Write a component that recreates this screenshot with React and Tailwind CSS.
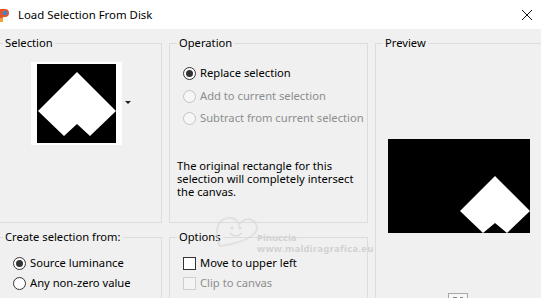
import React from "react";

const font = { fontFamily: '"Noto Sans", "Open Sans", Arial, sans-serif' };

function Radio({ checked, disabled, label }) {
  return (
    <div className="flex items-center h-full">
      <span
        className={`flex shrink-0 items-center justify-center w-[13px] h-[13px] rounded-full border ${
          disabled ? "border-[#c4c4c4] bg-[#f6f6f6]" : "border-[#333] bg-white"
        }`}
      >
        {checked && <span className="w-[7px] h-[7px] rounded-full bg-[#333]" />}
      </span>
      <span className={`ml-[4px] whitespace-nowrap ${disabled ? "text-[#8d8d8d]" : "text-black"}`}>
        {label}
      </span>
    </div>
  );
}

function Check({ disabled, label }) {
  return (
    <div className="flex items-center h-full">
      <span
        className={`shrink-0 w-[13px] h-[13px] border ${
          disabled ? "border-[#cfcfcf] bg-[#f4f4f4]" : "border-[#333] bg-white"
        }`}
      />
      <span className={`ml-[4px] whitespace-nowrap ${disabled ? "text-[#8d8d8d]" : "text-black"}`}>
        {label}
      </span>
    </div>
  );
}

function Group({ title, className, legendClass, children }) {
  return (
    <fieldset className={`min-w-0 border border-[#dcdcdc] ${className}`}>
      <legend className={`px-[2px] leading-[16px] text-[11.2px] text-black ${legendClass}`}>
        {title}
      </legend>
      {children}
    </fieldset>
  );
}

export default function App() {
  return (
    <div
      className="relative w-[541px] h-[298px] overflow-hidden bg-[#f0f0f0] text-[11.2px]"
      style={font}
    >
      {/* title bar */}
      <div className="flex items-center h-[29px] bg-white">
        <svg width="9" height="16" viewBox="0 0 9 16">
          <path d="M0 2 H5 A4 4 0 0 1 5 10 H3 V15 H0 Z" fill="#e8542c" />
          <circle cx="5" cy="6" r="2.2" fill="#2a8fd8" />
          <path d="M0 11 h3 v4 h-3 z" fill="#f3a13a" />
        </svg>
        <span className="ml-[9px] text-[11.4px] text-black">Load Selection From Disk</span>
        <svg width="12" height="12" viewBox="0 0 12 12" className="ml-auto mr-[8px]">
          <path d="M1 1 L11 11 M11 1 L1 11" stroke="#111" strokeWidth="1" />
        </svg>
      </div>

      {/* body */}
      <div className="flex pt-[6px] gap-[7px]">
        <div className="flex shrink-0 flex-col gap-[6px] ml-[-1px] w-[163px]">
          <Group title="Selection" className="h-[188px]" legendClass="ml-[3px]">
            <div className="flex items-center mt-[11px] ml-[31px]">
              <div className="bg-white px-[6px] py-[2px]">
                <svg width="79" height="79" viewBox="0 0 79 79" className="block">
                  <rect width="79" height="79" fill="#000" />
                  <polygon points="40,8 79,47 53,72 40,60 27,72 1,47" fill="#fff" />
                </svg>
              </div>
              <svg width="6" height="4" viewBox="0 0 6 4" className="ml-[3px] mb-[2px]">
                <path d="M0 0 H6 L3 3 Z" fill="#222" />
              </svg>
            </div>
          </Group>
          <Group title="Create selection from:" className="h-[80px]" legendClass="ml-[3px]">
            <div className="mt-[8px] ml-[13px]">
              <div className="h-[20px]">
                <Radio checked label="Source luminance" />
              </div>
              <div className="h-[20px]">
                <Radio label="Any non-zero value" />
              </div>
            </div>
          </Group>
        </div>

        <div className="flex shrink-0 flex-col gap-[6px] w-[199px]">
          <Group title="Operation" className="h-[188px]" legendClass="ml-[7px]">
            <div className="mt-[11px] ml-[13px]">
              <div className="h-[23px]">
                <Radio checked label="Replace selection" />
              </div>
              <div className="h-[22px]">
                <Radio disabled label="Add to current selection" />
              </div>
              <div className="h-[22px]">
                <Radio disabled label="Subtract from current selection" />
              </div>
            </div>
            <p className="mt-[30px] ml-[7px] leading-[13px] text-black whitespace-nowrap">
              The original rectangle for this
              <br />
              selection will completely intersect
              <br />
              the canvas.
            </p>
          </Group>
          <Group title="Options" className="h-[80px]" legendClass="ml-[7px]">
            <div className="mt-[8px] ml-[13px]">
              <div className="h-[20px]">
                <Check label="Move to upper left" />
              </div>
              <div className="h-[20px]">
                <Check disabled label="Clip to canvas" />
              </div>
            </div>
          </Group>
        </div>

        <Group title="Preview" className="shrink-0 w-[200px] h-[300px]" legendClass="ml-[7px]">
          <div className="mt-[88px] ml-[12px]">
            <svg width="142" height="94" viewBox="0 0 142 94" className="block">
              <rect width="142" height="94" fill="#000" />
              <polygon points="107,37 142,72 119,94 107,84 95,94 72,72" fill="#fff" />
            </svg>
            <div className="flex gap-[3px] mt-[60px] ml-[60px] w-[20px] h-[10px] border border-[#a9a9a9] bg-[#f6f6f6] px-[4px] pt-[3px]">
              <span className="w-[4px] h-[3px] bg-[#8a8a8a]" />
              <span className="w-[4px] h-[3px] bg-[#8a8a8a]" />
            </div>
          </div>
        </Group>
      </div>

      {/* watermark */}
      <div className="absolute left-[212px] top-[212px] pointer-events-none opacity-60">
        <svg width="48" height="42" viewBox="0 0 48 42">
          <path
            d="M8 34 C2 22 4 8 16 6 C22 5 26 9 27 13 C31 6 40 5 44 12 C48 20 38 30 8 34 Z"
            fill="none"
            stroke="#d8d8d8"
            strokeWidth="2"
          />
          <circle cx="20" cy="16" r="1.5" fill="#cfcfcf" />
          <circle cx="28" cy="16" r="1.5" fill="#cfcfcf" />
          <path d="M18 21 Q24 27 30 21" fill="none" stroke="#cfcfcf" strokeWidth="1.6" />
        </svg>
      </div>
      <div className="absolute left-[257px] top-[232px] leading-[11px] text-[9.5px] font-bold text-[#d2d2d2] pointer-events-none">
        <div>Pinuccia</div>
        <div className="tracking-[0.3px]">www.maldiragrafica.eu</div>
      </div>
    </div>
  );
}
